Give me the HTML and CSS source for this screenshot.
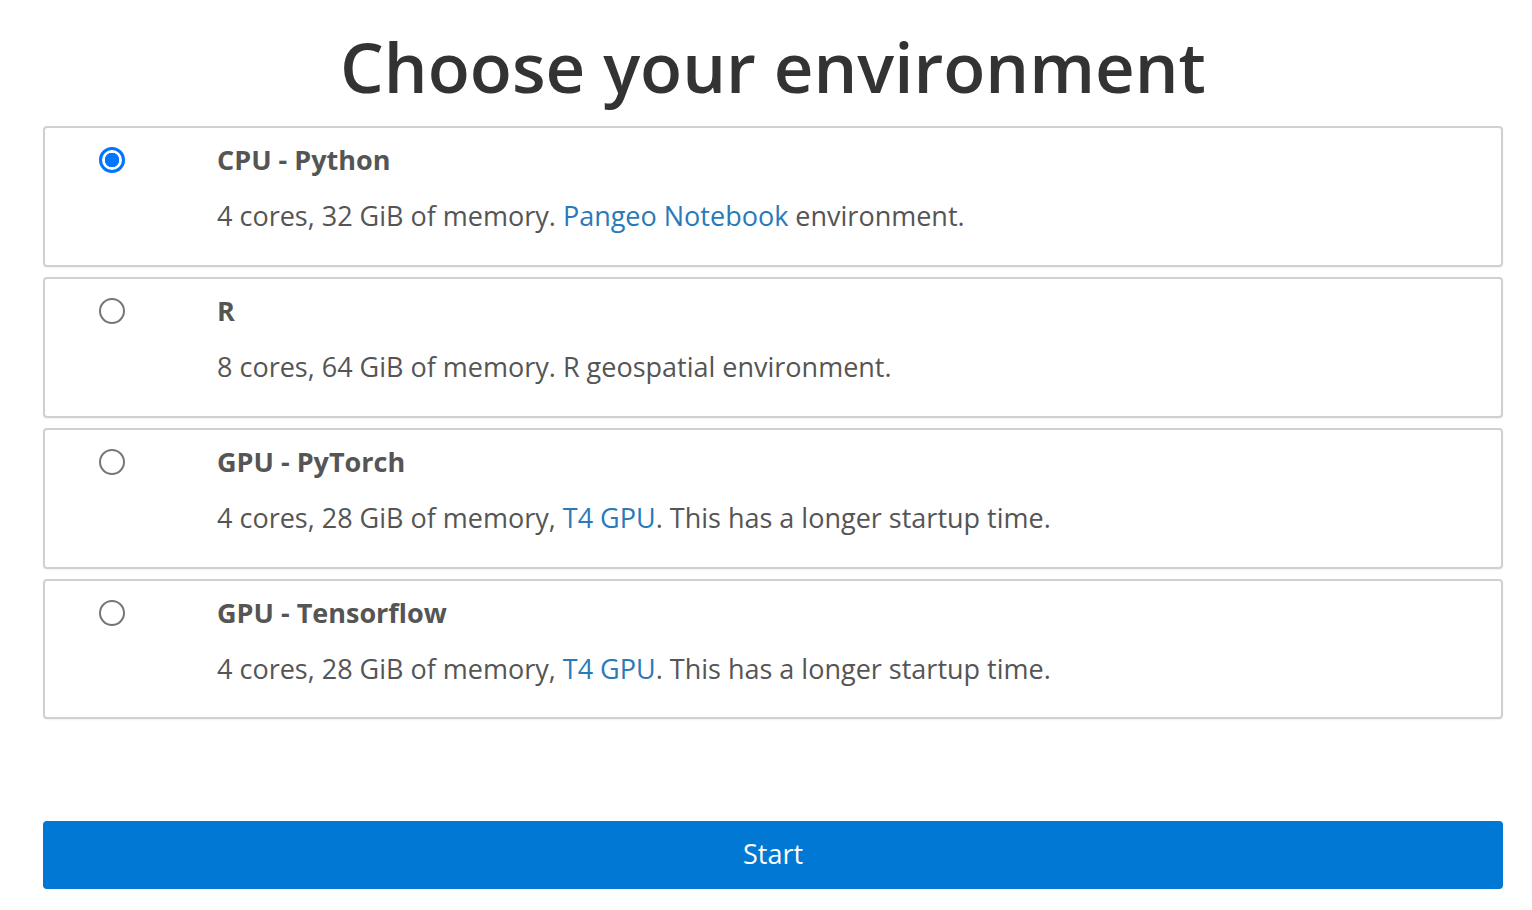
FILE: index.html
```html
<!DOCTYPE html>
<html>
<head>
<meta charset="utf-8">
<title>Choose your environment</title>
<link rel="stylesheet" href="styles.css">
</head>
<body>
<div class="page">
  <h1 class="heading">Choose your environment</h1>
  <form class="form">
    <label class="option">
      <span class="radio-col"><input type="radio" name="env" class="radio" checked></span>
      <span class="body">
        <strong class="name">CPU - Python</strong>
        <span class="desc">4 cores, 32 GiB of memory. <a class="link" href="#">Pangeo Notebook</a> environment.</span>
      </span>
    </label>
    <label class="option">
      <span class="radio-col"><input type="radio" name="env" class="radio"></span>
      <span class="body">
        <strong class="name">R</strong>
        <span class="desc">8 cores, 64 GiB of memory. R geospatial environment.</span>
      </span>
    </label>
    <label class="option">
      <span class="radio-col"><input type="radio" name="env" class="radio"></span>
      <span class="body">
        <strong class="name">GPU - PyTorch</strong>
        <span class="desc">4 cores, 28 GiB of memory, <a class="link" href="#">T4 GPU</a>. This has a longer startup time.</span>
      </span>
    </label>
    <label class="option">
      <span class="radio-col"><input type="radio" name="env" class="radio"></span>
      <span class="body">
        <strong class="name">GPU - Tensorflow</strong>
        <span class="desc">4 cores, 28 GiB of memory, <a class="link" href="#">T4 GPU</a>. This has a longer startup time.</span>
      </span>
    </label>
    <button type="button" class="start">Start</button>
  </form>
</div>
</body>
</html>
```
FILE: styles.css
```css
html, body {
  margin: 0;
  padding: 0;
  background: #ffffff;
}
body {
  font-family: "Open Sans", "Noto Sans", "DejaVu Sans", sans-serif;
  color: #555555;
}
.page {
  padding: 0 29px 0 43px;
}
.heading {
  margin: 24px 0 18px;
  text-align: center;
  font-size: 69px;
  font-weight: 600;
  line-height: 84px;
  color: #333333;
}
.form {
  display: flex;
  flex-direction: column;
  gap: 10px;
}
.option {
  display: grid;
  grid-template-columns: 172px 1fr;
  height: 141px;
  box-sizing: border-box;
  border: 2px solid #d0d0d0;
  border-radius: 4px;
  box-shadow: 0 1px 2px rgba(0,0,0,0.06);
  cursor: pointer;
}
.option:last-of-type {
  height: 140px;
}
.radio-col {
  display: flex;
  justify-content: flex-start;
  align-items: flex-start;
  padding-left: 54px;
  padding-top: 19px;
}
.radio {
  -webkit-appearance: none;
  appearance: none;
  box-sizing: border-box;
  margin: 0;
  width: 26px;
  height: 26px;
  border: 2px solid #767676;
  border-radius: 50%;
  background: #ffffff;
}
.radio:checked {
  border: 3px solid #0075ff;
  background: radial-gradient(circle, #0075ff 0 7px, #ffffff 7.5px);
}
.body {
  display: flex;
  flex-direction: column;
  padding-top: 12px;
  gap: 16px;
}
.name {
  font-size: 27px;
  line-height: 40px;
  font-weight: 700;
  color: #555555;
}
.desc {
  font-size: 27px;
  line-height: 40px;
  color: #555555;
}
.link {
  color: #2a7ab8;
  text-decoration: none;
}
.start {
  margin-top: 92px;
  height: 68px;
  padding: 0 0 4px;
  border: none;
  border-radius: 4px;
  background: #0078d4;
  color: #ffffff;
  font-family: inherit;
  font-size: 27px;
  cursor: pointer;
}
```
